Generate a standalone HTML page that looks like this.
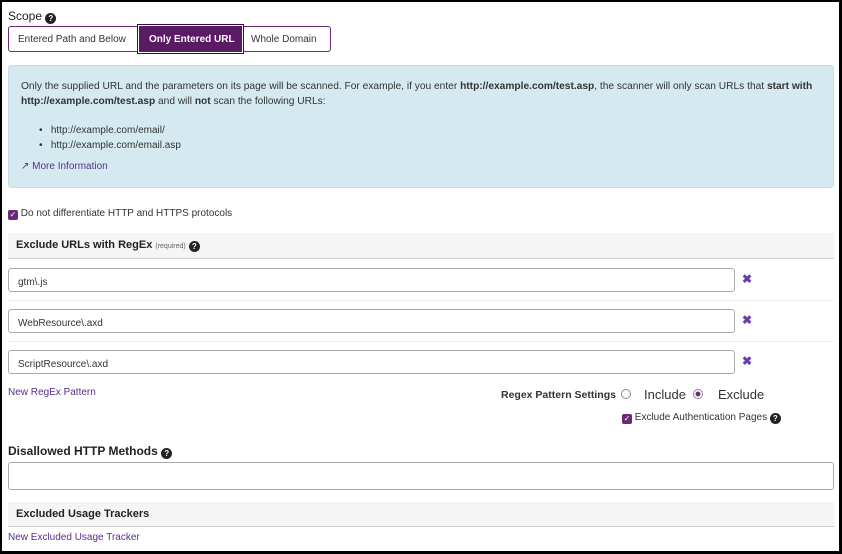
<!DOCTYPE html>
<html><head><meta charset="utf-8"><style>
*{box-sizing:border-box;margin:0;padding:0}
body{width:842px;height:554px;background:#000;font-family:"Liberation Sans",sans-serif;color:#333;position:relative;overflow:hidden}
.pg{position:absolute;left:2px;top:2px;width:837px;height:549px;background:#fff}
.a{position:absolute;white-space:nowrap}
.q{display:inline-block;width:11px;height:11px;border-radius:50%;background:#222;color:#fff;font-size:8px;font-weight:bold;text-align:center;line-height:11px;vertical-align:-1px}
.inp{position:absolute;border:1px solid #aaa;border-radius:3px;background:#fff;font-size:10px;padding-left:9px;line-height:27px;color:#333}
.x{position:absolute;color:#6a3bb0;font-size:12px;font-weight:bold}
.band{position:absolute;left:6px;width:826px;background:#f5f5f5;border-bottom:1px solid #ccc;font-size:11px;font-weight:bold;color:#222;padding-left:8px}
.cb{display:inline-block;width:10px;height:10px;background:#6b2a78;border-radius:2px;color:#fff;font-size:8px;line-height:10px;text-align:center;vertical-align:-1px}
.sep{position:absolute;left:6px;width:826px;height:1px;background:#eee}
a{color:#5a2d8a}
</style></head><body><div class="pg">
<div class="a" style="left:6px;top:7px;font-size:12px;color:#222">Scope <span class="q">?</span></div>
<div class="a" style="left:6px;top:24px;width:323px;height:26px;border:1px solid #6b2a78;border-radius:3px"></div>
<div class="a" style="left:16px;top:32px;font-size:10px">Entered Path and Below</div>
<div class="a" style="left:135px;top:22px;width:107px;height:30px;background:#5a1a64;border:1px solid #3a0a44;box-shadow:inset 0 0 0 1px #fff"></div>
<div class="a" style="left:147px;top:32px;font-size:10px;color:#fff;font-weight:bold">Only Entered URL</div>
<div class="a" style="left:249px;top:32px;font-size:10px">Whole Domain</div>
<div class="a" style="left:6px;top:63px;width:826px;height:123px;background:#d5eaf0;border:1px solid #c2e0e8;border-radius:3px"></div>
<div class="a" style="left:19px;top:77px;font-size:10.2px;line-height:15px;color:#333">Only the supplied URL and the parameters on its page will be scanned. For example, if you enter <b>http://example.com/test.asp</b>, the scanner will only scan URLs that <b>start with</b><br><b>http://example.com/test.asp</b> and will <b>not</b> scan the following URLs:</div>
<div class="a" style="left:37px;top:121px;font-size:10px;line-height:15px">•&nbsp;&nbsp; http://example.com/email/<br>•&nbsp;&nbsp; http://example.com/email.asp</div>
<div class="a" style="left:19px;top:159px;font-size:10px"><a>&#x2197; More Information</a></div>
<div class="a" style="left:6px;top:206px;font-size:10px"><span class="cb">✓</span> Do not differentiate HTTP and HTTPS protocols</div>
<div class="band" style="top:231px;height:26px;line-height:24px">Exclude URLs with RegEx <span style="font-size:7px;font-weight:normal;color:#666">(required)</span> <span class="q">?</span></div>
<div class="inp" style="left:6px;top:266px;width:727px;height:24px">gtm\.js</div>
<div class="x" style="left:740px;top:270px">✖</div>
<div class="sep" style="top:298px"></div>
<div class="inp" style="left:6px;top:307px;width:727px;height:24px">WebResource\.axd</div>
<div class="x" style="left:740px;top:311px">✖</div>
<div class="sep" style="top:339px"></div>
<div class="inp" style="left:6px;top:348px;width:727px;height:24px">ScriptResource\.axd</div>
<div class="x" style="left:740px;top:352px">✖</div>
<div class="a" style="left:6px;top:385px;font-size:10px;color:#5a2d8a">New RegEx Pattern</div>
<div class="a" style="left:499px;top:387px;font-size:10.5px;font-weight:bold;color:#333">Regex Pattern Settings</div>
<div class="a" style="left:619px;top:387px;width:10px;height:10px;border:1px solid #888;border-radius:50%"></div>
<div class="a" style="left:642px;top:385px;font-size:13px">Include</div>
<div class="a" style="left:691px;top:387px;width:10px;height:10px;border:1px solid #888;border-radius:50%;background:radial-gradient(#6b2a78 40%,#fff 45%)"></div>
<div class="a" style="left:716px;top:385px;font-size:13px">Exclude</div>
<div class="a" style="left:620px;top:410px;font-size:10px"><span class="cb">✓</span> Exclude Authentication Pages <span class="q">?</span></div>
<div class="a" style="left:6px;top:442px;font-size:12px;font-weight:bold;color:#222">Disallowed HTTP Methods <span class="q">?</span></div>
<div class="inp" style="left:6px;top:460px;width:826px;height:28px"></div>
<div class="band" style="top:500px;height:25px;line-height:24px">Excluded Usage Trackers</div>
<div class="a" style="left:6px;top:530px;font-size:10px;color:#5a2d8a">New Excluded Usage Tracker</div>
</div></body></html>
